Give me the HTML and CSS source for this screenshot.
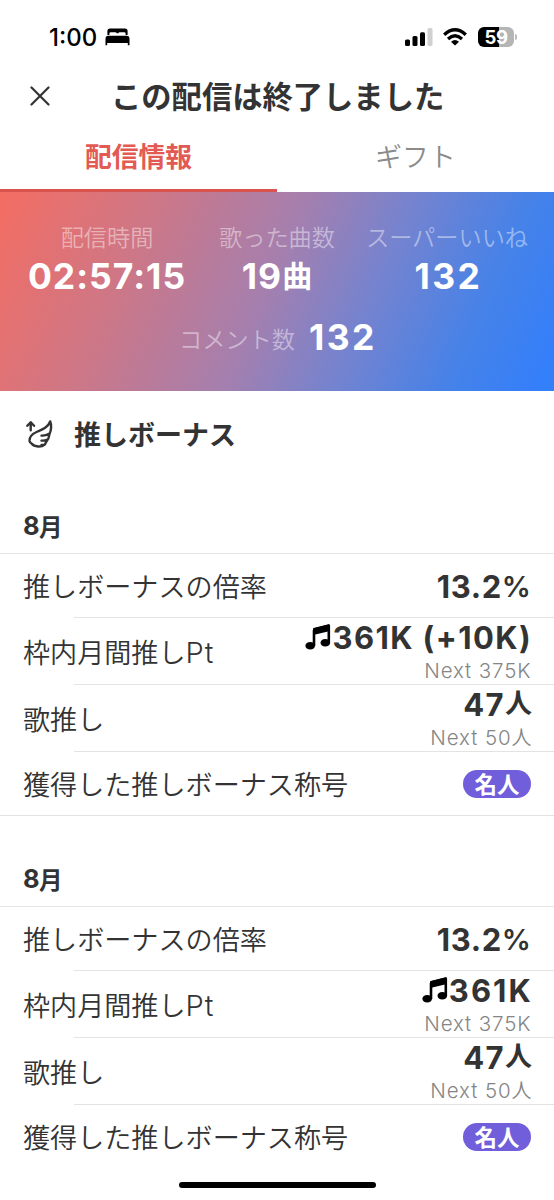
FILE: index.html
```html
<!DOCTYPE html>
<html lang="ja">
<head>
<meta charset="utf-8">
<title>この配信は終了しました</title>
<link rel="stylesheet" href="styles.css">
</head>
<body>
<svg class="defs" width="0" height="0" aria-hidden="true">
  <symbol id="note" viewBox="0 0 26 26">
    <path d="M9 5.5 L23.8 1.8 V19" fill="none" stroke="#000" stroke-width="2.6" stroke-linejoin="round"/>
    <path d="M9 5 L23.8 1.3 V6.4 L9 9.8Z" fill="#000" stroke="#000" stroke-width="2" stroke-linejoin="round"/>
    <path d="M9 6 V22" stroke="#000" stroke-width="2.6"/>
    <ellipse cx="5.2" cy="21.8" rx="4.8" ry="3.8"/><ellipse cx="20.3" cy="18.7" rx="4.8" ry="3.8"/>
  </symbol>
</svg>
<div class="status">
  <span class="clock">1:00</span>
  <svg class="bed" viewBox="0 0 25 18"><path d="M2.4 7V3.2Q2.4.5 5 .5H20Q22.6.5 22.6 3.2V7H20.6V5.4Q20.6 4.2 19.2 4.2H14.8Q13.4 4.2 13.4 5.2H11.6Q11.6 4.2 10.2 4.2H5.8Q4.4 4.2 4.4 5.4V7Z"/><path d="M.5 17.2V11Q.5 7.7 3.3 7.7H21.7Q24.5 7.7 24.5 11V17.2H22.8V15H2.2V17.2Z"/></svg>
  <svg class="signal" viewBox="0 0 28 18"><rect x="0" y="11.5" width="5" height="6.5" rx="1.5"/><rect x="7.5" y="8" width="5" height="10" rx="1.5"/><rect x="15" y="4.2" width="5" height="13.8" rx="1.5"/><rect x="22.5" y="0" width="5" height="18" rx="1.5" fill="#d0d0d0"/></svg>
  <svg class="wifi" viewBox="0 0 24 18"><g fill="none" stroke="#000" stroke-width="3.3"><path d="M1.2 6.7Q12-3.2 22.8 6.7"/><path d="M5 11Q12 4.6 19 11"/></g><path d="M12 17.6L8 13.8Q12 10.4 16 13.8Z"/></svg>
  <span class="battery">59</span><span class="cap"></span>
</div>
<header class="header">
  <svg class="close" viewBox="0 0 20 20"><path d="M1.5 1.5L18.5 18.5M18.5 1.5L1.5 18.5"/></svg>
  <h1 class="title">この配信は終了しました</h1>
</header>
<nav class="tabs"><span class="tab active">配信情報</span><span class="tab">ギフト</span></nav>
<section class="stats">
  <div class="stat-row">
    <div class="stat"><span class="stat-label">配信時間</span><b class="stat-value">02:57:15</b></div>
    <div class="stat mid"><span class="stat-label">歌った曲数</span><b class="stat-value">19<i class="unit">曲</i></b></div>
    <div class="stat end"><span class="stat-label">スーパーいいね</span><b class="stat-value">132</b></div>
  </div>
  <div class="comments"><span class="stat-label">コメント数</span><b class="stat-value">132</b></div>
</section>
<h2 class="section">
  <svg class="wing" viewBox="0 0 28 30"><path d="M5.7 11.2V4M2.3 6.8L5.7 3.2L9.1 6.8" /><path d="M25.2 2.4C23 8.5 17.5 10.5 12.5 12.5C7 15 4 18.5 4.5 22C4.8 23.2 5.4 24 6.5 24.5C9.5 28.2 16.5 28.4 19.7 25.6C20.4 24.8 20.6 23.7 22.3 21.2C24.3 19 23.6 17.3 24.6 14.8C26.3 11.5 26.7 5.5 25.2 2.4M16.5 16.6C19.2 16.8 22 16 24.5 14.5M16.5 21.6C18.6 21.8 20.6 21.4 22.4 20.6M16.5 26C17.8 26.1 19 26 19.7 25.6"/></svg>
  <span class="section-text">推しボーナス</span>
</h2>
<section class="month">
  <h3 class="month-name"><span class="digit">8</span>月</h3>
  <div class="row"><span class="label">推しボーナスの倍率</span><span class="value"><b class="num">13.2<i class="percent">%</i></b></span></div>
  <div class="row tall"><span class="label">枠内月間推し<i class="latin">Pt</i></span><span class="value"><b class="num"><svg class="note"><use href="#note"/></svg>361K (+10K)</b><small class="next">Next 375K</small></span></div>
  <div class="row tall"><span class="label">歌推し</span><span class="value"><b class="num">47<i class="person">人</i></b><small class="next">Next 50<i class="cjk">人</i></small></span></div>
  <div class="row"><span class="label">獲得した推しボーナス称号</span><span class="badge">名人</span></div>
</section>
<section class="month second">
  <h3 class="month-name"><span class="digit">8</span>月</h3>
  <div class="row"><span class="label">推しボーナスの倍率</span><span class="value"><b class="num">13.2<i class="percent">%</i></b></span></div>
  <div class="row tall"><span class="label">枠内月間推し<i class="latin">Pt</i></span><span class="value"><b class="num wide"><svg class="note"><use href="#note"/></svg>361K</b><small class="next">Next 375K</small></span></div>
  <div class="row tall"><span class="label">歌推し</span><span class="value"><b class="num">47<i class="person">人</i></b><small class="next">Next 50<i class="cjk">人</i></small></span></div>
  <div class="row"><span class="label">獲得した推しボーナス称号</span><span class="badge">名人</span></div>
</section>
<div class="home"></div>
</body>
</html>
```
FILE: styles.css
```css
* { box-sizing: border-box; }
body { margin: 0; width: 554px; height: 1200px; overflow: hidden; position: relative; background: #fff; color: #333; font-family: Inter, "Noto Sans CJK JP", sans-serif; }
i { font-style: normal; }
.defs { position: absolute; }
.status { display: flex; align-items: center; height: 74px; padding-left: 49px; color: #000; }
.clock { width: 56px; font-size: 24px; font-weight: 550; letter-spacing: 0; white-space: nowrap; }
.bed { width: 25px; height: 18px; margin-right: 275px; }
.signal { width: 28px; height: 18px; margin-right: 10px; }
.wifi { width: 24px; height: 18px; margin-right: 11px; }
.battery { width: 36px; height: 20px; border-radius: 6px; background: linear-gradient(90deg, #000 59%, #b5b5b5 59%); color: #fff; font-size: 18.5px; font-weight: 700; line-height: 20px; text-align: center; letter-spacing: -.5px; }
.cap { width: 2px; height: 6px; margin-left: 1px; background: #bbb; border-radius: 0 2px 2px 0; }
.header { display: flex; align-items: center; height: 44px; padding-left: 30px; }
.close { width: 20px; height: 20px; fill: none; stroke: #333; stroke-width: 2.2; stroke-linecap: round; }
.title { margin: 0 0 0 61px; font-family: "Noto Sans CJK JP", sans-serif; font-size: 30.3px; font-weight: 700; line-height: 42px; padding-bottom: 2px; white-space: nowrap; }
.tabs { display: flex; height: 74px; }
.tab { width: 277px; height: 74px; padding-bottom: 3px; font: 350 26.8px/75px "Noto Sans CJK JP", sans-serif; text-align: center; color: #8b8b8b; }
.tab.active { font-weight: 700; color: #e35a54; border-bottom: 3px solid #d9534f; }
.stats { height: 199px; padding-top: 28px; color: #fff; background: linear-gradient(114deg, #f46d62 0%, #cd7787 25%, #a57fae 48%, #7583cf 65%, #4682e8 83%, #347ffa 97%); }
.stat-row { display: flex; }
.stat { display: flex; flex-direction: column; align-items: center; width: 214px; }
.stat.mid { width: 126px; }
.stat.end { width: 214px; }
.stat-label { font: 350 23.2px/32px "Noto Sans CJK JP", sans-serif; color: rgba(255,255,255,.44); white-space: nowrap; }
.stat-value { display: flex; align-items: center; height: 50px; font-size: 35.5px; font-weight: 660; line-height: 50px; letter-spacing: 1px; white-space: nowrap; }
.stat.end .stat-value, .comments .stat-value { letter-spacing: 2.4px; }
.stat.end .stat-value { padding-left: 3px; }
.unit { font-size: 30px; letter-spacing: 0; line-height: 48px; align-self: flex-start; }
.comments { display: flex; align-items: center; height: 48px; margin-top: 12px; padding-left: 179px; gap: 14px; }
.comments .stat-label { margin-top: -1px; }
.section { display: flex; align-items: center; height: 84px; margin: 0; padding: 1px 0 0 25px; gap: 21px; font: 700 27px/40px "Noto Sans CJK JP", sans-serif; }
.wing { width: 28px; height: 30px; fill: none; stroke: #333; stroke-width: 2.4; stroke-linecap: round; stroke-linejoin: round; }
.month-name { display: flex; align-items: flex-end; height: 79px; margin: 0; padding: 0 23px 8px; border-bottom: 1.5px solid #e6e6e6; font: 700 23.5px/38px "Noto Sans CJK JP", sans-serif; }
.digit { width: 16px; font: 700 25.5px/38px Inter, sans-serif; }
.second .month-name { height: 91px; }
.row { position: relative; display: flex; align-items: center; justify-content: space-between; height: 64px; padding: 0 23px 0 23px; }
.row.tall { height: 67px; }
.row::after { content: ""; position: absolute; left: 74px; right: 0; bottom: 0; height: 1.5px; background: #e3e3e3; }
.row:last-child::after { left: 0; }
.second .row:last-child::after { display: none; }
.label { font: 350 27.1px/40px "Noto Sans CJK JP", sans-serif; white-space: nowrap; }
.latin { font: 350 29px/1 Inter, sans-serif; letter-spacing: 1px; }
.value { display: flex; flex-direction: column; align-items: flex-end; }
.num { display: flex; align-items: center; font-size: 31px; font-weight: 660; line-height: 37px; letter-spacing: .6px; white-space: pre; }
.tall .num { letter-spacing: 1.4px; margin-right: -1px; }
.tall .num.wide { letter-spacing: 2.1px; margin-right: -2px; }
.percent { font-weight: 560; font-size: 29px; letter-spacing: 0; }
.note { width: 26px; height: 26px; margin-right: 1px; }
.next { display: flex; white-space: pre; font-size: 20.5px; font-weight: 300; line-height: 29px; letter-spacing: .9px; margin-right: -.5px; color: #858585; }
.cjk { font: 350 20px/28px "Noto Sans CJK JP", sans-serif; letter-spacing: 0; }
.person { font-size: 27px; letter-spacing: 0; line-height: 38px; }
.badge { width: 68px; height: 28px; border-radius: 14px; background: #705edb; color: #fff; font: 700 22.5px/26px "Noto Sans CJK JP", sans-serif; text-align: center; }
.home { position: absolute; left: 179px; top: 1182px; width: 197px; height: 6px; border-radius: 3px; background: #000; }
```
